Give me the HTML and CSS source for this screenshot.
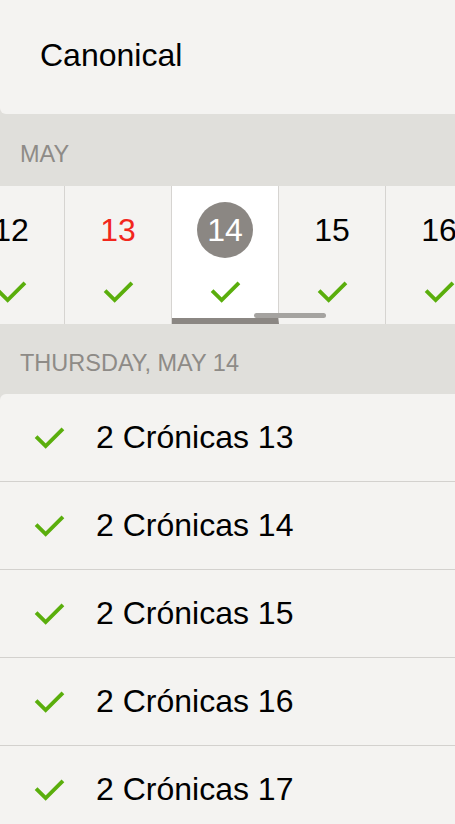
FILE: index.html
```html
<!DOCTYPE html>
<html lang="es">
<head>
  <meta charset="UTF-8">
  <title>Canonical</title>
  <link rel="stylesheet" href="styles.css">
</head>
<body>

<!-- Title -->
<div class="title-bar">
  <h1>Canonical</h1>
</div>

<!-- Month + day strip -->
<div class="section-head month">MAY</div>
<div class="day-strip">
  <div class="day"><span class="num">12</span><svg class="check" viewBox="0 0 32 24"><path d="M2 11 L12 21 L30 3"/></svg></div>
  <div class="day"><span class="num sunday">13</span><svg class="check" viewBox="0 0 32 24"><path d="M2 11 L12 21 L30 3"/></svg></div>
  <div class="day selected"><span class="num">14</span><svg class="check" viewBox="0 0 32 24"><path d="M2 11 L12 21 L30 3"/></svg></div>
  <div class="day"><span class="num">15</span><svg class="check" viewBox="0 0 32 24"><path d="M2 11 L12 21 L30 3"/></svg></div>
  <div class="day"><span class="num">16</span><svg class="check" viewBox="0 0 32 24"><path d="M2 11 L12 21 L30 3"/></svg></div>
  <div class="scroll-thumb"></div>
</div>

<!-- Readings -->
<div class="section-head">THURSDAY, MAY 14</div>
<ul class="readings">
  <li><svg class="check" viewBox="0 0 32 24"><path d="M2 11 L12 21 L30 3"/></svg>2 Crónicas 13</li>
  <li><svg class="check" viewBox="0 0 32 24"><path d="M2 11 L12 21 L30 3"/></svg>2 Crónicas 14</li>
  <li><svg class="check" viewBox="0 0 32 24"><path d="M2 11 L12 21 L30 3"/></svg>2 Crónicas 15</li>
  <li><svg class="check" viewBox="0 0 32 24"><path d="M2 11 L12 21 L30 3"/></svg>2 Crónicas 16</li>
  <li><svg class="check" viewBox="0 0 32 24"><path d="M2 11 L12 21 L30 3"/></svg>2 Crónicas 17</li>
</ul>

</body>
</html>
```

FILE: styles.css
```css
body {
  font-family: "Liberation Sans", Arial, sans-serif;
  background: #e0dfdb;
  margin: 0;
  overflow: hidden;
}
.title-bar {
  height: 114px;
  background: #f4f3f1;
  border-bottom-left-radius: 6px;
  display: flex;
  align-items: center;
  padding-left: 40px;
}
.title-bar h1 {
  margin: 0;
  font-size: 32px;
  font-weight: normal;
  color: #000;
  padding-bottom: 4px;
}
.section-head {
  height: 70px;
  display: flex;
  align-items: center;
  padding: 8px 0 0 20px;
  box-sizing: border-box;
  font-size: 23.5px;
  color: #8e8b87;
}
.month {
  height: 72px;
}
.day-strip {
  position: relative;
  display: flex;
  height: 138px;
  margin-left: -42px;
  background: #f4f3f1;
  width: 540px;
}
.day {
  flex: 0 0 107px;
  box-sizing: border-box;
  border-right: 1px solid #d6d4d1;
  display: flex;
  flex-direction: column;
  align-items: center;
  padding-top: 16px;
}
.day .num {
  width: 56px;
  height: 56px;
  border-radius: 50%;
  display: flex;
  align-items: center;
  justify-content: center;
  font-size: 32px;
  color: #000;
}
.day .sunday {
  color: #f2261c;
}
.day .check {
  margin-top: 22px;
}
.day.selected {
  background: #fff;
  border-bottom: 6px solid #8b8783;
}
.day.selected .num {
  background: #8b8783;
  color: #fff;
}
.scroll-thumb {
  position: absolute;
  left: 296px;
  top: 127px;
  width: 72px;
  height: 5px;
  border-radius: 3px;
  background: #a5a3a0;
}
.check {
  width: 31px;
  height: 23px;
  fill: none;
  stroke: #5aae0c;
  stroke-width: 4;
}
.readings {
  list-style: none;
  margin: 0;
  padding: 0;
  background: #f4f3f1;
  border-top-left-radius: 6px;
}
.readings li {
  height: 88px;
  box-sizing: border-box;
  border-bottom: 1px solid #d3d1ce;
  display: flex;
  align-items: center;
  font-size: 32px;
  color: #000;
  padding-left: 34px;
}
.readings .check {
  margin-right: 31px;
}
```
